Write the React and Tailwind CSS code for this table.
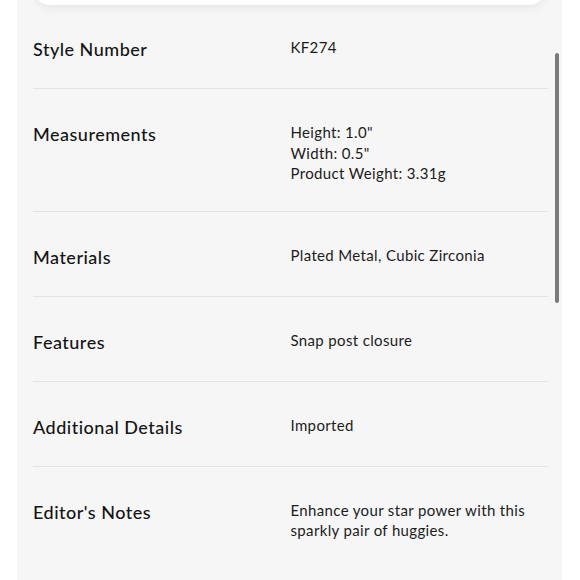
import React from 'react';

const details = [
  { label: 'Style Number', value: ['KF274'] },
  { label: 'Measurements', value: ['Height: 1.0"', 'Width: 0.5"', 'Product Weight: 3.31g'] },
  { label: 'Materials', value: ['Plated Metal, Cubic Zirconia'] },
  { label: 'Features', value: ['Snap post closure'] },
  { label: 'Additional Details', value: ['Imported'] },
  { label: "Editor's Notes", value: ['Enhance your star power with this', 'sparkly pair of huggies.'] },
];

const DetailRow = ({ label, value, last }) => (
  <div
    className={`grid grid-cols-2 pt-[33px] pb-[27px] ${last ? '' : 'border-b-[1.5px] border-[#e4e4e4]'}`}
  >
    <div className="text-[18px] leading-[24px] font-medium text-[#141414] tracking-[0.5px]">{label}</div>
    <div className="text-[15px] leading-[20.5px] text-[#1c1c1c] tracking-[0.35px]">
      {value.map((line) => (
        <div key={line}>{line}</div>
      ))}
    </div>
  </div>
);

const App = () => {
  return (
    <div className="h-[580px] w-[580px] overflow-hidden bg-white" style={{ fontFamily: 'Lato, "Open Sans", sans-serif' }}>
      <div className="relative ml-[17px] flex h-full w-[545px] flex-col bg-[#f6f6f6]">
        <div className="mx-[18px] -mt-[20px] h-[25px] shrink-0 rounded-b-[14px] bg-white shadow-[0_2px_10px_rgba(0,0,0,0.08)]" />
        <div className="-mt-px pl-[16px] pr-[14px]">
          {details.map((d, i) => (
            <DetailRow key={d.label} label={d.label} value={d.value} last={i === details.length - 1} />
          ))}
        </div>
        <div className="absolute left-[538px] top-[53px] h-[250px] w-[4px] rounded-full bg-[#7a7a7a]" />
      </div>
    </div>
  );
};

export default App;
